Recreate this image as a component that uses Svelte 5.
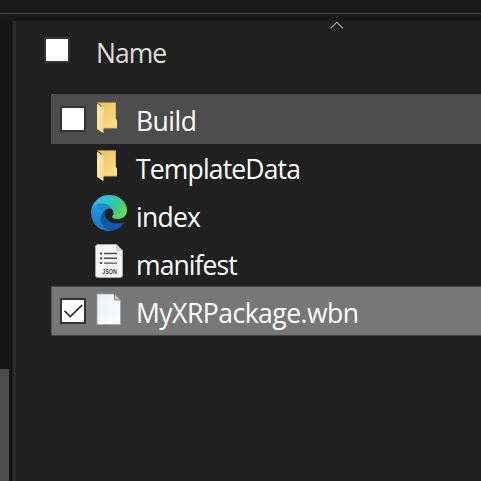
<script>
  const files = [
    { name: 'Build', icon: 'folder', hover: true, spacing: -0.5 },
    { name: 'TemplateData', icon: 'folder', spacing: -0.83 },
    { name: 'index', icon: 'edge', spacing: -0.75 },
    { name: 'manifest', icon: 'json', spacing: -0.9 },
    { name: 'MyXRPackage.wbn', icon: 'file', selected: true, spacing: -0.5 }
  ];
</script>

<div class="window">
  <div class="top"></div>
  <div class="body">
    <aside><div class="thumb"></div></aside>
    <div class="gutter"></div>
    <main>
      <header>
        <span class="box"></span>
        <span class="title">Name</span>
        <svg class="sort" width="14" height="8" viewBox="0 0 14 8"><path d="M.7 7.300 6.800 1.200 12.900 7.300" fill="none" stroke="#b0b0b0" stroke-width="1.1" /></svg>
      </header>
      <div class="list">
        {#each files as f}
          <div class="row" class:hover={f.hover} class:selected={f.selected}>
            <span class="check">
              {#if f.hover || f.selected}
                <span class="box">
                  {#if f.selected}
                    <svg width="22" height="22" viewBox="0 0 22 22"><path d="M2.500 10.800 8.300 16.500 20.300 4.800" fill="none" stroke="#303030" stroke-width="1.700" /></svg>
                  {/if}
                </span>
              {/if}
            </span>
            <svg class="icon" width="40" height="50" viewBox="0 0 40 50">
              {#if f.icon === 'folder'}
                <path d="M8 8.500H26.800V25L28 26.200V34.200H13V12Z" fill="url(#back)" />
                <path d="M8 8.500H26.800" stroke="#9b8450" stroke-width=".8" />
                <path d="M14 34.200H28" stroke="#b59648" stroke-width=".6" />
                <path d="M8 9.500 14.500 14V39.200L8 35Z" fill="url(#flap)" />
              {:else if f.icon === 'edge'}
                <g transform="translate(2 5) scale(.1406)">
                  <path fill="url(#edgeDark)" d="M231 190.500c-3.400 1.800-6.900 3.400-10.500 4.700a101.900 101.900 0 0 1-35.900 6.500c-47.300 0-88.500-32.500-88.500-74.300a31.500 31.500 0 0 1 16.400-27.300c-42.800 1.800-53.800 46.400-53.800 72.500 0 73.900 68.100 81.400 82.800 81.400 7.900 0 19.800-2.300 27-4.600l1.300-.4a128.300 128.300 0 0 0 66.600-52.800 4 4 0 0 0-5.400-5.700Z" />
                  <path fill="url(#edgeBlue)" d="M105.700 241.400a79.200 79.200 0 0 1-22.700-21.300 80.700 80.700 0 0 1 29.500-120c3.200-1.500 8.500-4.100 15.600-4a32.400 32.400 0 0 1 25.700 13 31.900 31.900 0 0 1 6.300 18.700c0-.2 24.500-79.600-80-79.600-43.900 0-80 41.600-80 78.200a130.200 130.200 0 0 0 12.100 56 128 128 0 0 0 156.400 67 75.500 75.500 0 0 1-62.800-8Z" />
                  <path fill="url(#edgeGreen)" d="M152.300 148.900c-.8 1-3.300 2.500-3.300 5.700 0 2.600 1.700 5.100 4.700 7.200 14.400 10 41.500 8.700 41.600 8.700a59.600 59.600 0 0 0 30.300-8.300 61.400 61.400 0 0 0 30.400-52.900c.3-22.400-8-37.300-11.300-43.900C223.500 23.900 177.700 0 128 0A128 128 0 0 0 0 126.200c.5-36.500 36.800-66 80-66 3.500 0 23.500.3 42 10.100 16.300 8.600 24.900 19 30.800 29.200 6.200 10.700 7.300 24.100 7.300 29.500 0 5.300-2.700 13.300-7.800 19.900Z" />
                </g>
              {:else if f.icon === 'json'}
                <path d="M9 6.500H27.500L33.500 12.500V37Q33.500 39.500 31 39.500H9Q6.500 39.500 6.500 37V9Q6.500 6.500 9 6.500Z" fill="#f5f5f5" stroke="#aaa" />
                <path d="M27.500 7V12.500H33" fill="#d3d3d3" stroke="#c0c0c0" stroke-width=".6" />
                <g stroke="#505050" stroke-width="1.400"><path d="M15 15.500H28M15 20.300H28M15 25.100H28" /><path d="M11 15.500H13.200M11 20.300H13.200M11 25.100H13.200" stroke-width="2" /></g>
                <text x="20.500" y="36" text-anchor="middle" textLength="14.500" lengthAdjust="spacingAndGlyphs">JSON</text>
              {:else}
                <path d="M8 8H25.500L31.500 14V38.500H8Z" fill="url(#paper)" stroke="#a5a5a5" stroke-width=".8" />
                <path d="M25.500 8V14H31.500Z" fill="#d0d0d0" stroke="#777" stroke-width=".9" />
              {/if}
            </svg>
            <span class="name" style="letter-spacing: {f.spacing}px">{f.name}</span>
          </div>
        {/each}
      </div>
    </main>
  </div>
</div>

<svg class="defs" width="0" height="0">
  <defs>
    <linearGradient id="back" x2="1" y2="1"><stop offset=".2" stop-color="#ebc766" /><stop offset="1" stop-color="#ffe18a" /></linearGradient>
    <linearGradient id="flap" x2="1" y2="1"><stop stop-color="#ffe9ae" /><stop offset="1" stop-color="#fbdb8c" /></linearGradient>
    <linearGradient id="paper" x2="1" y2="1"><stop stop-color="#eef0f2" /><stop offset="1" stop-color="#fbfcfd" /></linearGradient>
    <linearGradient id="edgeDark" x2="1"><stop stop-color="#0c59a4" /><stop offset="1" stop-color="#1457a4" /></linearGradient>
    <linearGradient id="edgeBlue" x1=".8" y1="0" x2=".3" y2="1"><stop stop-color="#1b80c8" /><stop offset=".45" stop-color="#2392d8" /><stop offset="1" stop-color="#1474c8" /></linearGradient>
    <linearGradient id="edgeGreen" x1="0" y1=".3" x2="1" y2=".7"><stop stop-color="#35b9e8" /><stop offset=".35" stop-color="#2fc2d4" /><stop offset=".7" stop-color="#3fca84" /><stop offset="1" stop-color="#66e04e" /></linearGradient>
  </defs>
</svg>

<style>
  :global(body) { background: #202020; overflow: hidden; }
  .window { width: 481px; height: 481px; display: flex; flex-direction: column; overflow: hidden; background: #202020; color: #fff; font-family: "Open Sans", "Noto Sans", sans-serif; font-size: 26.5px; }
  .top { height: 21px; flex: none; box-sizing: border-box; background: linear-gradient(#191919 13px, #4b4b4b 13px, #4b4b4b 14px, #191919 14px); }
  .body { flex: 1; display: flex; min-height: 0; }
  aside { width: 10px; background: #171717; display: flex; align-items: flex-end; }
  .thumb { width: 9px; height: 112px; background: #4d4d4d; }
  .gutter { width: 6px; background: linear-gradient(90deg, #121212 2px, #202020 2px, #202020 3px, #2b2b2b 3px); }
  main { flex: 1; min-width: 0; }
  header { height: 73px; display: flex; align-items: flex-start; padding-left: 28px; box-sizing: border-box; }
  header .box { margin-top: 16px; }
  .title { width: 234px; margin: 14px 0 0 26px; line-height: 36px; color: #dedede; letter-spacing: -1px; }
  .sort { display: block; }
  .box { width: 26px; height: 26px; box-sizing: border-box; border: 2px solid #333; background: #fff; flex: none; display: block; }
  .box svg { display: block; }
  .list { padding-left: 35px; }
  .row { height: 50px; margin-bottom: -2px; display: flex; align-items: center; box-sizing: border-box; }
  .hover { background: #4d4d4d; }
  .selected { background: #777; box-shadow: inset 0 1px #444, inset 0 -1px #444, inset 1px 0 #555; }
  .check { width: 38px; padding-left: 9px; box-sizing: border-box; flex: none; }
  .icon { flex: none; display: block; }
  .icon text { font: bold 7px "Liberation Sans", sans-serif; fill: #444; }
  .name { margin-left: 7px; line-height: 36px; white-space: nowrap; position: relative; top: 2px; }
  .defs { position: absolute; }
</style>
